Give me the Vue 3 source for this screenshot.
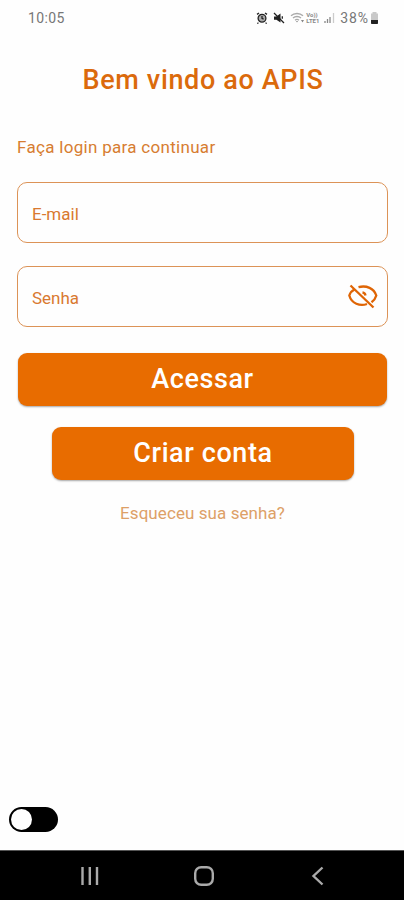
<template>
  <div class="screen">
    <header class="status-bar">
      <span class="clock">10:05</span>
      <div class="status-icons">
        <svg class="alarm" width="12" height="12" viewBox="0 0 12 12">
          <path d="M1 2.4 3 1M11 2.4 9 1M2.4 10.6l-1 1M9.6 10.6l1 1" />
          <circle cx="6" cy="6.2" r="3.9" />
          <path d="M6 4v2.4l1.6.8" />
        </svg>
        <svg class="mute" width="12" height="12" viewBox="0 0 12 12">
          <path class="solid" d="M1 4.5h2.4L7.5 1.5v9L3.4 7.8H1z" />
          <path d="M1 1l10 10M9.3 4.2v2.6" />
        </svg>
        <svg class="wifi" width="16" height="12" viewBox="0 0 16 12">
          <path d="M1 3.8C4.2.7 9.8.7 13 3.8M3 6c2.200-2 5.800-2 8 0M5 8.200c1.200-1 2.800-1 4 0" />
          <path class="solid" d="M6 9h2l-1 1.500zM11 8h3l-1.500 2.500z" />
        </svg>
        <span class="volte"><span>Vo))</span><span>LTE1</span></span>
        <svg class="signal" width="11" height="12" viewBox="0 0 11 12">
          <path d="M1 11V9M3.500 11V7M6 11V5" />
          <path class="weak" d="M9.500 11V1" />
        </svg>
        <span class="percent">38%</span>
        <svg class="battery" width="9" height="13" viewBox="0 0 9 13">
          <path d="M2.500 0h4v1.500H8V8H1V1.500h1.500z" fill="#c9c9c9" />
          <path d="M1 8h7v3.200q0 .8-.8.8H1.800Q1 12 1 11.200z" fill="#222" />
        </svg>
      </div>
    </header>

    <main class="content">
      <h1>Bem vindo ao APIS</h1>
      <form @submit.prevent>
        <p class="intro">Faça login para continuar</p>
        <label class="field">
          <input v-model="email" type="email" placeholder="E-mail" />
        </label>
        <div class="field">
          <input v-model="password" :type="showPassword ? 'text' : 'password'" placeholder="Senha" />
          <button type="button" class="eye" aria-label="Mostrar senha" @click="showPassword = !showPassword">
            <svg width="30" height="26" viewBox="0 0 30 26">
              <path d="M10.500 3.200C18.500 1 26 4.500 28.300 11.500C27.500 14.500 26 16.500 23.500 18.300M6.500 5.500C3.500 7 2 9 1.300 11.500C3.500 19.500 12 22.500 19 20M14.500 8.500c1.700.2 2.700 1.300 3 3" />
              <path d="M2.500 1.500l23 22" />
            </svg>
          </button>
        </div>
        <button type="submit" class="btn btn-login">Acessar</button>
        <button type="button" class="btn btn-create">Criar conta</button>
        <a class="forgot" href="#" @click.prevent>Esqueceu sua senha?</a>
      </form>
    </main>

    <button type="button" role="switch" :aria-checked="dark" :class="['toggle', { on: dark }]" @click="dark = !dark">
      <span class="knob"></span>
    </button>

    <nav class="nav-bar">
      <svg width="20" height="20" viewBox="0 0 20 20"><path d="M2.500 1v18M9.800 1v18M17 1v18" /></svg>
      <svg width="20" height="20" viewBox="0 0 20 20"><rect x="1.200" y="1.200" width="17.600" height="17.600" rx="6" /></svg>
      <svg width="20" height="20" viewBox="0 0 20 20"><path d="M14.500 1.500 5.500 10l9 8.500" /></svg>
    </nav>
  </div>
</template>

<script setup>
import { ref } from 'vue'

const email = ref('')
const password = ref('')
const showPassword = ref(false)
const dark = ref(false)
</script>

<style>
body {
  margin: 0;
  background: #fefefe;
}
</style>

<style scoped>
.screen {
  display: flex;
  flex-direction: column;
  height: 900px;
  overflow: hidden;
  background: #fefefe;
  color: #db6a0c;
  font-family: Roboto, sans-serif;
}

.screen * {
  box-sizing: border-box;
}

svg {
  display: block;
  flex: none;
  fill: none;
}

button {
  padding: 0;
  border: 0;
  font-family: inherit;
  cursor: pointer;
}

.status-bar {
  display: flex;
  flex: none;
  align-items: center;
  justify-content: space-between;
  height: 36px;
  padding: 0 25px 0 28px;
  color: #777;
}

.clock {
  font-size: 14px;
  letter-spacing: 0.4px;
}

.status-icons {
  display: flex;
  align-items: center;
}

.status-icons svg {
  stroke-width: 1.3;
}

.alarm,
.mute {
  margin-right: 5px;
  stroke: #222;
}

.alarm {
  fill: #aaa;
}

.mute .solid {
  fill: #222;
  stroke: none;
}

.wifi {
  stroke: #aaa;
}

.wifi .solid {
  fill: #888;
  stroke: none;
}

.volte {
  display: flex;
  flex-direction: column;
  width: 16px;
  font-size: 6px;
  font-weight: 700;
  line-height: 6px;
  color: #888;
}

.signal {
  margin: 0 5px 0 2px;
  stroke: #888;
}

.signal .weak {
  stroke: #ccc;
}

.percent {
  margin-right: 1px;
  font-size: 14px;
  letter-spacing: 0.9px;
}

.status-icons .battery {
  stroke: none;
}

.content {
  flex: 1;
  padding: 0 16px 0 17px;
}

h1 {
  margin: 28px 0 0;
  padding-left: 1px;
  font-size: 27px;
  font-weight: 500;
  line-height: 32px;
  letter-spacing: 0.64px;
  text-align: center;
}

form {
  display: flex;
  flex-direction: column;
  padding-top: 41px;
}

.intro {
  margin: 0 0 25px;
  font-size: 17px;
  line-height: 20px;
  letter-spacing: 0.3px;
  color: #d77d31;
}

.field {
  display: flex;
  align-items: center;
  height: 61px;
  margin-bottom: 23px;
  padding: 0 9px 0 14px;
  border: 1px solid #dc9357;
  border-radius: 10px;
}

input {
  flex: 1;
  min-width: 0;
  padding: 3px 0 0;
  border: 0;
  outline: 0;
  background: none;
  color: inherit;
  font: 17px Roboto, sans-serif;
}

input::placeholder {
  color: #d97930;
  opacity: 1;
}

.eye {
  background: none;
}

.eye svg {
  stroke: #df6505;
  stroke-width: 2.3;
}

.btn {
  height: 53px;
  border-radius: 9px;
  background: #e86c00;
  box-shadow: 0 1px 2px rgba(0, 0, 0, 0.35);
  color: #fff;
  font-size: 27px;
  font-weight: 500;
  line-height: 53px;
  letter-spacing: 0.6px;
}

.btn-login {
  margin: 3px 1px 21px;
}

.btn-create {
  margin: 0 34px 0 35px;
}

.forgot {
  align-self: center;
  margin-top: 23px;
  color: #dda067;
  font-size: 17px;
  line-height: 20px;
  letter-spacing: 0.08px;
  text-decoration: none;
}

.toggle {
  display: flex;
  flex: none;
  width: 49px;
  height: 25px;
  margin: 0 0 18px 9px;
  padding: 2px;
  border-radius: 13px;
  background: #000;
}

.toggle.on {
  justify-content: flex-end;
}

.knob {
  width: 21px;
  height: 21px;
  border-radius: 50%;
  background: #fff;
}

.nav-bar {
  display: flex;
  flex: none;
  align-items: center;
  justify-content: center;
  gap: 94px;
  height: 50px;
  padding-left: 3px;
  border-top: 1px solid #555;
  background: #000;
}

.nav-bar svg {
  stroke: #aaa;
  stroke-width: 2.4;
}
</style>
